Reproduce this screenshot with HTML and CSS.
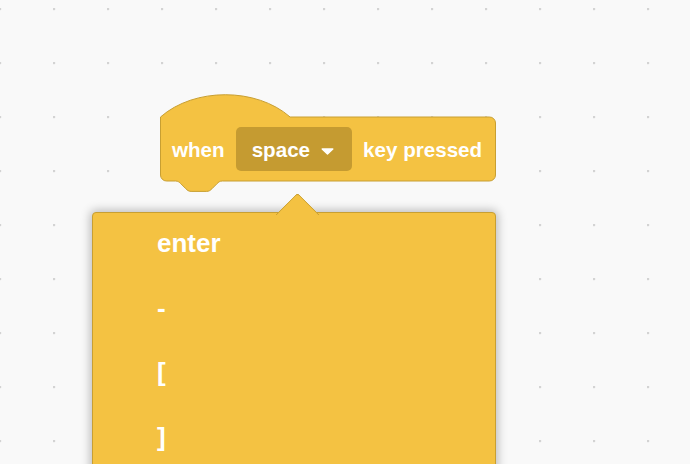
FILE: index.html
```html
<!DOCTYPE html>
<html lang="en">
<head>
<meta charset="utf-8">
<title>when key pressed</title>
<link rel="stylesheet" href="styles.css">
</head>
<body>
<main class="workspace">
  <div class="hat-block">
    <svg class="hat-shape" width="337" height="100" viewBox="0 0 337 100" aria-hidden="true">
      <path d="M0.5 23 c33.75 -29.7 95.85 -29.7 129.6 0 H329.5 a6 6 0 0 1 6 6 V81 a6 6 0 0 1 -6 6 H62.3 c-2.6 0 -3.9 1.3 -5.2 2.6 l-5.2 5.2 c-1.3 1.3 -2.6 2.6 -5.2 2.6 h-15.6 c-2.6 0 -3.9 -1.3 -5.2 -2.6 l-5.2 -5.2 c-1.3 -1.3 -2.6 -2.6 -5.2 -2.6 H6.5 a6 6 0 0 1 -6 -6 Z"/>
    </svg>
    <div class="hat-row">
      <span class="label">when</span>
      <span class="field">
        <span class="field-text">space</span>
        <svg class="caret" width="13" height="7" viewBox="0 0 13 7" aria-hidden="true"><path d="M1.2 1 H11.8 L6.5 6 Z"/></svg>
      </span>
      <span class="label">key pressed</span>
    </div>
  </div>

  <div class="dropdown">
    <div class="dropdown-arrow"></div>
    <ul class="menu">
      <li>enter</li>
      <li>-</li>
      <li>[</li>
      <li>]</li>
    </ul>
  </div>
</main>
</body>
</html>
```

FILE: styles.css
```css
html, body {
  margin: 0;
  padding: 0;
}

body {
  width: 690px;
  height: 464px;
  overflow: hidden;
  background: #f9f9f9;
  font-family: "Liberation Sans", Arial, Helvetica, sans-serif;
}

.workspace {
  position: relative;
  width: 690px;
  height: 464px;
  overflow: hidden;
  background-color: #f9f9f9;
  background-image: radial-gradient(circle at 1px 1px, #d3d3d3 0, #d3d3d3 1px, rgba(211,211,211,0) 1.7px);
  background-size: 54px 54px;
  background-position: -1px 8px;
}

/* ---------- hat block ---------- */
.hat-block {
  position: absolute;
  left: 160px;
  top: 94px;
  width: 336px;
  height: 98px;
  padding-top: 23px;
  box-sizing: border-box;
}

.hat-shape {
  position: absolute;
  left: 0;
  top: 0;
}

.hat-shape path {
  fill: #f4c242;
  stroke: #c89f32;
  stroke-width: 1;
}

.hat-row {
  position: relative;
  display: flex;
  align-items: center;
  height: 64px;
  padding: 0 12px;
  gap: 11px;
  color: #ffffff;
  font-size: 20.6px;
  font-weight: 700;
  white-space: nowrap;
}

.label {
  padding-top: 2px;
}

.field {
  display: flex;
  align-items: center;
  height: 44px;
  padding: 0 18px 0 16px;
  gap: 11px;
  border-radius: 5px;
  background: #c59b31;
}

.field-text {
  padding-top: 2px;
}

.caret {
  margin-top: 4px;
}

.caret path {
  fill: #ffffff;
  stroke: #ffffff;
  stroke-width: 1.4;
  stroke-linejoin: round;
}

/* ---------- dropdown menu ---------- */
.dropdown {
  position: absolute;
  left: 92px;
  top: 192px;
  width: 404px;
}

.dropdown-arrow {
  position: absolute;
  left: 189.5px;
  top: 6.5px;
  width: 31px;
  height: 31px;
  box-sizing: border-box;
  background: #f4c242;
  border-top: 1px solid #c89f32;
  border-left: 1px solid #c89f32;
  border-top-left-radius: 4px;
  transform: rotate(45deg);
  z-index: 2;
}

.menu {
  list-style: none;
  margin: 20px 0 0;
  padding: 0 0 0 64px;
  height: 300px;
  box-sizing: border-box;
  background: #f4c242;
  border: 1px solid #c89f32;
  border-radius: 4px;
  box-shadow: 0 0 10px 2px rgba(0, 0, 0, 0.25);
  color: #ffffff;
  font-size: 26px;
  font-weight: 700;
}

.menu li {
  height: 64.6px;
  line-height: 60px;
}
```
